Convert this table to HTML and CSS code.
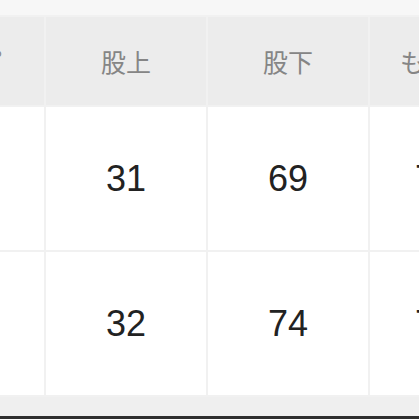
FILE: index.html
```html
<!DOCTYPE html>
<html lang="ja">
<head>
<meta charset="utf-8">
<link rel="stylesheet" href="styles.css">
</head>
<body>
<div class="viewport">
  <div class="top-strip"></div>
  <div class="size-table">
    <div class="cell head">ヒップ</div>
    <div class="cell head">股上</div>
    <div class="cell head">股下</div>
    <div class="cell head">もも周り</div>

    <div class="cell val">98</div>
    <div class="cell val">31</div>
    <div class="cell val">69</div>
    <div class="cell val">70.5</div>

    <div class="cell val">102</div>
    <div class="cell val">32</div>
    <div class="cell val">74</div>
    <div class="cell val">72.5</div>
  </div>
  <div class="bottom-band"></div>
  <div class="bottom-edge"></div>
</div>
</body>
</html>
```
FILE: styles.css
```css
html, body {
  margin: 0;
  padding: 0;
}
body {
  width: 419px;
  height: 419px;
  overflow: hidden;
  background: #f3f3f3;
}
.viewport {
  width: 419px;
  height: 419px;
  overflow: hidden;
  display: flex;
  flex-direction: column;
}
.top-strip {
  height: 15px;
  background: #f7f7f7;
  flex: none;
}
.size-table {
  flex: none;
  display: grid;
  grid-template-columns: repeat(4, 160px);
  grid-template-rows: 88px 143px 143px;
  gap: 2px;
  padding: 2px 0;
  margin-left: -116px;
  width: max-content;
  background: #f1f1f1;
}
.cell {
  display: flex;
  align-items: center;
  justify-content: center;
  white-space: nowrap;
}
.head {
  background: #ececec;
  color: #858585;
  font-family: "Noto Sans CJK JP", "Noto Sans", sans-serif;
  font-size: 25px;
}
.val {
  background: #ffffff;
  color: #222222;
  font-family: "Liberation Sans", Arial, sans-serif;
  font-size: 36px;
}
.bottom-band {
  flex: none;
  height: 19px;
  background: #efefef;
}
.bottom-edge {
  flex: none;
  height: 3px;
  background: #2e2e2e;
}
```
